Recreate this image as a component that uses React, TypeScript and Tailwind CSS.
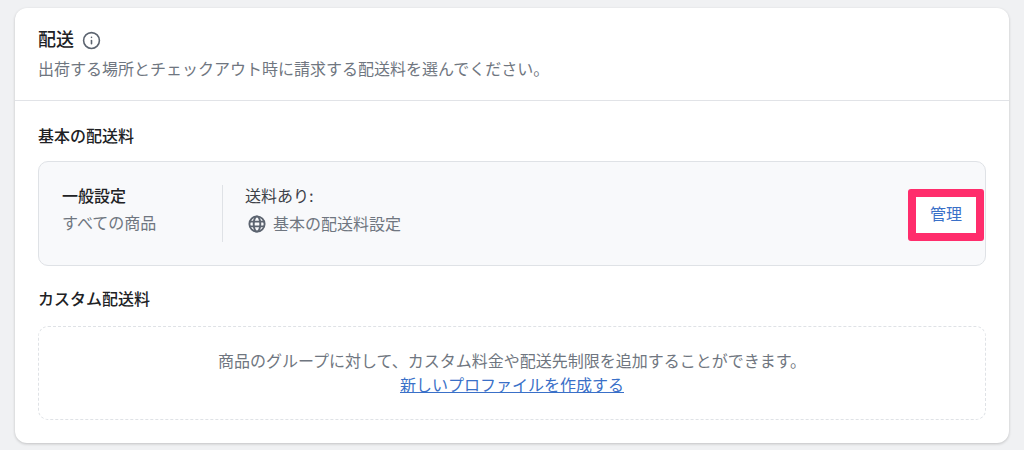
import React from "react";
import { Info } from "lucide-react";

const font = { fontFamily: '"Inter", "Noto Sans CJK JP", sans-serif' };

const GlobeIcon = () => (
    <svg width="18" height="18" viewBox="0 0 18 18" fill="none" stroke="#5c6470" strokeWidth="1.9">
        <circle cx="9" cy="9" r="7.6" />
        <ellipse cx="9" cy="9" rx="3.3" ry="7.6" />
        <path d="M1.8 6.6h14.4M1.8 11.4h14.4" />
    </svg>
);

const App: React.FC = () => {
    return (
        <div className="h-[450px] w-[1024px] overflow-hidden bg-[#f0f1f3] px-[15px] pt-2" style={font}>
            <div className="h-[435px] w-[994px] rounded-xl bg-white shadow-[0_1px_3px_rgba(0,0,0,0.2)]">
                {/* Header */}
                <div className="h-[93px] border-b border-[#e1e3e7] px-[23px] pt-[19px]">
                    <div className="flex h-[26px] items-center gap-[8px]">
                        <h2 className="text-[18px] font-medium leading-[26px] text-[#202124]">配送</h2>
                        <Info size={19} strokeWidth={2} className="text-[#5c6470]" />
                    </div>
                    <p className="mt-[4px] text-[16px] leading-[24px] text-[#6f7680]">
                        出荷する場所とチェックアウト時に請求する配送料を選んでください。
                    </p>
                </div>

                <div className="px-[23px] pt-[23px]">
                    <h3 className="text-[16px] font-medium leading-[24px] text-[#202124]">基本の配送料</h3>

                    {/* General profile */}
                    <div className="mt-[13px] flex h-[105px] w-[948px] items-center justify-between rounded-[10px] border border-[#dfe2e6] bg-[#f8f9fb] pl-[23px] pr-px">
                        <div className="flex items-center">
                            <div className="flex h-[57px] w-[161px] flex-col justify-center border-r border-[#dfe2e6] pb-[7px]">
                                <div className="text-[16px] font-medium leading-[27px] text-[#202124]">一般設定</div>
                                <div className="text-[16px] leading-[27px] text-[#6f7680]">すべての商品</div>
                            </div>
                            <div className="pb-[7px] pl-[22px]">
                                <div className="text-[16px] leading-[27px] text-[#3c4149]">送料あり:</div>
                                <div className="flex h-[27px] items-center gap-[7px] pl-[3px] text-[16px] text-[#6f7680]">
                                    <GlobeIcon />
                                    基本の配送料設定
                                </div>
                            </div>
                        </div>
                        <button className="mt-[3px] flex h-[52px] w-[76px] items-center justify-center rounded-[3px] border-[8px] border-[#ff2d6c] bg-white pb-[2px] text-[16px] text-[#3a70c8]">
                            管理
                        </button>
                    </div>

                    <h3 className="mt-[21px] text-[16px] font-medium leading-[24px] text-[#202124]">カスタム配送料</h3>

                    {/* Empty custom profiles */}
                    <div className="mt-[15px] flex h-[94px] w-[948px] flex-col items-center justify-center rounded-[10px] border border-dashed border-[#dfe2e6] pb-px text-[16px] leading-[24px]">
                        <p className="text-[#6f7680]">商品のグループに対して、カスタム料金や配送先制限を追加することができます。</p>
                        <a href="#" className="text-[#3a70c8] underline">新しいプロファイルを作成する</a>
                    </div>
                </div>
            </div>
        </div>
    );
};

export default App;
